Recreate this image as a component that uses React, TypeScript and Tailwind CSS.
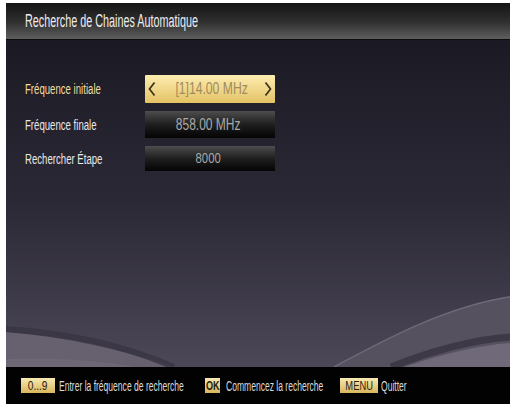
const font = "font-['Liberation_Sans',Arial,sans-serif]";

// the TV menu font is very condensed; squeeze Liberation Sans horizontally
function N({ className, children }: { className: string; children: React.ReactNode }) {
  return <span className={`inline-block whitespace-nowrap ${className}`}>{children}</span>;
}

function Chevron({ dir }: { dir: "l" | "r" }) {
  return (
    <svg width="8" height="16" viewBox="0 0 8 16">
      <polyline
        points={dir === "l" ? "6.5,1.5 1.5,8 6.5,14.5" : "1.5,1.5 6.5,8 1.5,14.5"}
        fill="none"
        stroke="#3a311c"
        strokeWidth="1.7"
      />
    </svg>
  );
}

function Row({ label, active, children }: { label: string; active?: boolean; children: React.ReactNode }) {
  return (
    <div className="flex items-center">
      <div className="w-[120px] h-[20px] flex items-center">
        <N className={`text-[15.5px] scale-x-[0.62] origin-left ${active ? "text-[#f1dd9e]" : "text-[#e8e8e8]"}`}>{label}</N>
      </div>
      {children}
    </div>
  );
}

const key = "h-[15px] flex items-center justify-center bg-gradient-to-b from-[#f8eab0] to-[#d8b65c] text-[#2a2210]";

export default function App() {
  return (
    <div className={`w-[510px] h-[404px] bg-white pl-[6px] pt-[3px] overflow-hidden ${font}`}>
      <div className="flex flex-col h-full">
        {/* title bar */}
        <div className="h-[37px] shrink-0 flex items-center pl-[19px] bg-gradient-to-b from-[#141414] via-[#2e2e2e] to-[#5e5e5e] border-b border-[#0c0c10]">
          <N className="text-[18px] text-[#ededed] scale-x-[0.6] origin-left">Recherche de Chaines Automatique</N>
        </div>

        {/* main */}
        <div className="relative flex-1 bg-gradient-to-b from-[#1b1a24] via-[#2c2936] to-[#4c4858] overflow-hidden">
          <svg className="absolute inset-0 w-full h-full" viewBox="0 0 504 326" preserveAspectRatio="none">
            <path d="M0 291 C 60 296, 115 308, 168 326 L 0 326 Z" fill="#66606f" />
            <path d="M0 288 C 60 292, 118 304, 168 326" fill="none" stroke="#383442" strokeWidth="6" opacity="0.8" />
            <path d="M0 318 C 50 316, 100 320, 130 326 L 0 326 Z" fill="#726c7b" opacity="0.6" />
            <path d="M328 326 C 380 298, 440 266, 504 256 L 504 326 Z" fill="#56515f" />
            <path d="M328 326 C 380 298, 440 266, 504 256" fill="none" stroke="#6f6a79" strokeWidth="1.5" />
            <path d="M385 326 C 425 310, 470 298, 504 296" fill="none" stroke="#3d3947" strokeWidth="7" />
            <path d="M398 326 C 432 314, 474 304, 504 302 L 504 326 Z" fill="#6f6979" />
          </svg>

          <div className="relative flex flex-col gap-[8px] pt-[35px] pl-[19px]">
            <Row label="Fréquence initiale" active>
              <div className="w-[130px] h-[28px] flex items-center justify-between px-[3px] rounded-[1px] bg-gradient-to-b from-[#fcedb0] to-[#e4c263]">
                <Chevron dir="l" />
                <N className="text-[16px] text-[#a08b5c] scale-x-[0.76] ml-[4px]">[1]14.00 MHz</N>
                <Chevron dir="r" />
              </div>
            </Row>
            <Row label="Fréquence finale">
              <div className="w-[130px] h-[27px] flex items-center justify-center bg-gradient-to-b from-[#4e4e4e] via-[#1f1f1f] to-[#050505]">
                <N className="text-[16px] text-[#a9a9a9] scale-x-[0.75] -ml-[4px]">858.00 MHz</N>
              </div>
            </Row>
            <Row label="Rechercher Étape">
              <div className="w-[130px] h-[25px] flex items-center justify-center bg-gradient-to-b from-[#4e4e4e] via-[#1f1f1f] to-[#050505]">
                <N className="text-[14.5px] text-[#a9a9a9] scale-x-[0.78] -ml-[4px]">8000</N>
              </div>
            </Row>
          </div>
        </div>

        {/* footer */}
        <div className="h-[37px] shrink-0 bg-[#020202] flex items-center pl-[15px] text-[#dadada]">
          <span className={`w-[34px] ${key}`}>
            <N className="text-[13px] scale-x-[0.78]">0...9</N>
          </span>
          <span className="ml-[4px] w-[125px]">
            <N className="text-[14px] scale-x-[0.61] origin-left">Entrer la fréquence de recherche</N>
          </span>
          <span className={`ml-[21px] w-[15px] ${key}`}>
            <N className="text-[13px] font-bold scale-x-[0.7]">OK</N>
          </span>
          <span className="ml-[6px] w-[92px]">
            <N className="text-[14px] scale-x-[0.61] origin-left">Commencez la recherche</N>
          </span>
          <span className={`ml-[22px] w-[38px] ${key}`}>
            <N className="text-[13px] scale-x-[0.72]">MENU</N>
          </span>
          <span className="ml-[3px]">
            <N className="text-[14px] scale-x-[0.61] origin-left">Quitter</N>
          </span>
        </div>
      </div>
    </div>
  );
}
